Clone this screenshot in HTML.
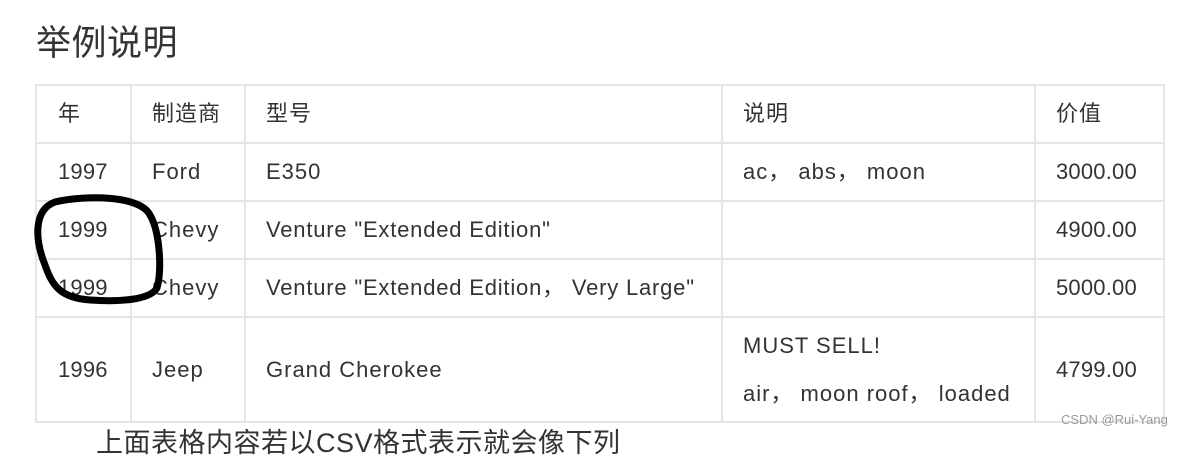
<!DOCTYPE html>
<html><head><meta charset="utf-8"><style>
body{margin:0;width:1182px;height:438px;overflow:hidden;background:#fff;font-family:"Liberation Sans","Noto Sans CJK SC",sans-serif;color:#333;position:relative}
.t{position:absolute;font-size:22px;white-space:nowrap;line-height:1;letter-spacing:1px}
.n{letter-spacing:0.2px}
.h{position:absolute;background:#e5e5e5;height:2px}
.v{position:absolute;background:#e5e5e5;width:2px}
</style></head><body>
<div class="t" style="left:36px;top:26px;font-size:35px;letter-spacing:0.5px">举例说明</div>
<div class="h" style="left:35px;width:1130px;top:84px"></div>
<div class="h" style="left:35px;width:1130px;top:142px"></div>
<div class="h" style="left:35px;width:1130px;top:200px"></div>
<div class="h" style="left:35px;width:1130px;top:258px"></div>
<div class="h" style="left:35px;width:1130px;top:316px"></div>
<div class="h" style="left:35px;width:1130px;top:421px"></div>
<div class="v" style="left:35px;top:84px;height:339px"></div>
<div class="v" style="left:130px;top:84px;height:339px"></div>
<div class="v" style="left:244px;top:84px;height:339px"></div>
<div class="v" style="left:721px;top:84px;height:339px"></div>
<div class="v" style="left:1034px;top:84px;height:339px"></div>
<div class="v" style="left:1163px;top:84px;height:339px"></div>

<div class="t" style="left:58px;top:103px">年</div>
<div class="t" style="left:152px;top:103px">制造商</div>
<div class="t" style="left:266px;top:103px">型号</div>
<div class="t" style="left:743px;top:103px">说明</div>
<div class="t" style="left:1056px;top:103px">价值</div>

<div class="t n" style="left:58px;top:161px">1997</div>
<div class="t" style="left:152px;top:161px">Ford</div>
<div class="t" style="left:266px;top:161px">E350</div>
<div class="t" style="left:743px;top:161px">ac， abs， moon</div>
<div class="t n" style="left:1056px;top:161px">3000.00</div>

<div class="t n" style="left:58px;top:219px">1999</div>
<div class="t" style="left:152px;top:219px">Chevy</div>
<div class="t" style="left:266px;top:219px;letter-spacing:0.8px">Venture "Extended Edition"</div>
<div class="t n" style="left:1056px;top:219px">4900.00</div>

<div class="t n" style="left:58px;top:277px">1999</div>
<div class="t" style="left:152px;top:277px">Chevy</div>
<div class="t" style="left:266px;top:277px;letter-spacing:0.8px">Venture "Extended Edition， Very Large"</div>
<div class="t n" style="left:1056px;top:277px">5000.00</div>

<div class="t n" style="left:58px;top:359px">1996</div>
<div class="t" style="left:152px;top:359px">Jeep</div>
<div class="t" style="left:266px;top:359px">Grand Cherokee</div>
<div class="t" style="left:743px;top:335px">MUST SELL!</div>
<div class="t" style="left:743px;top:383px">air， moon roof， loaded</div>
<div class="t n" style="left:1056px;top:359px">4799.00</div>

<div class="t" style="left:1061px;top:413px;font-size:13px;color:#999;letter-spacing:0">CSDN @Rui-Yang</div>
<div class="t" style="left:96px;top:430px;font-size:27px;letter-spacing:0.5px">上面表格内容若以CSV格式表示就会像下列</div>

<svg style="position:absolute;left:0;top:0" width="1182" height="438">
<path d="M150 215 C140 195 85 195 55 202 C33 210 35 240 45 265 C52 285 60 298 90 300 C120 302 150 300 157 288 C162 270 160 232 150 215" fill="none" stroke="#000" stroke-width="7" stroke-linecap="round"/>
</svg>
</body></html>
